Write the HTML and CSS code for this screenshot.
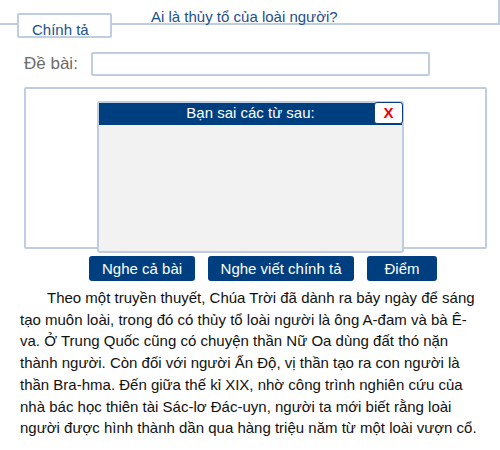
FILE: index.html
```html
<!DOCTYPE html>
<html lang="vi">
<head>
<meta charset="utf-8">
<link rel="stylesheet" href="styles.css">
</head>
<body>
<div class="topbar">
  <div class="tab">Chính tả</div>
  <div class="title">Ai là thủy tổ của loài người?</div>
</div>
<div class="row">
  <label class="label">Đề bài:</label>
  <div class="input"></div>
</div>
<div class="board">
  <div class="popup">
    <div class="popup-head">
      <span class="popup-title">Bạn sai các từ sau:</span>
      <span class="close">X</span>
    </div>
    <div class="popup-body"></div>
  </div>
</div>
<div class="buttons">
  <span class="btn">Nghe cả bài</span>
  <span class="btn">Nghe viết chính tả</span>
  <span class="btn btn-score">Điểm</span>
</div>
<p class="text">Theo một truyền thuyết, Chúa Trời đã dành ra bảy ngày để sáng tạo muôn loài, trong đó có thủy tổ loài người là ông A-đam và bà Ê-va. Ở Trung Quốc cũng có chuyện thần Nữ Oa dùng đất thó nặn thành người. Còn đối với người Ấn Độ, vị thần tạo ra con người là thần&nbsp;Bra-hma. Đến giữa thế kỉ XIX, nhờ công trình nghiên cứu của nhà&nbsp;bác học thiên tài Sác-lơ Đác-uyn, người ta mới biết rằng loài người được hình thành dần qua hàng triệu năm từ một loài vượn cổ.</p>
</body>
</html>
```

FILE: styles.css
```css
* { box-sizing: border-box; }
body {
  margin: 0;
  background: #fff;
  font-family: "Liberation Sans", Arial, sans-serif;
  color: #111;
}
.topbar {
  position: relative;
  width: 500px;
  height: 25px;
  border-right: 2px solid #bfcde0;
  border-bottom: 2px solid #bfcde0;
}
.tab {
  position: absolute;
  left: 17px;
  top: 13px;
  width: 95px;
  height: 25px;
  background: #fff;
  border: 2px solid #bfcde0;
  border-radius: 2px;
  padding: 6px 0 0 13px;
  font-size: 15px;
  line-height: 17px;
  color: #1d4f8e;
}
.title {
  padding: 8px 0 0 151px;
  font-size: 15px;
  line-height: 17px;
  color: #1d4f8e;
}
.row {
  display: flex;
  align-items: center;
  gap: 13px;
  margin-top: 27px;
  padding-left: 24px;
}
.label {
  font-size: 17px;
  color: #6b6b6b;
  line-height: 20px;
}
.input {
  width: 339px;
  height: 24px;
  border: 2px solid #bfcde0;
  border-radius: 2px;
}
.board {
  position: relative;
  margin: 11px 0 0 24px;
  width: 463px;
  height: 162px;
  border: 2px solid #bfcde0;
  border-radius: 2px;
}
.popup {
  position: absolute;
  left: 71px;
  top: 12px;
  width: 307px;
  height: 152px;
  background: #f2f2f2;
  border: 2px solid #bfcde0;
  border-radius: 3px;
  display: flex;
  flex-direction: column;
}
.popup-head {
  position: relative;
  height: 22px;
  background: #003f7f;
  display: flex;
  align-items: center;
  justify-content: center;
}
.popup-title {
  color: #fff;
  font-size: 15px;
  line-height: 17px;
  margin-top: -4px;
}
.close {
  position: absolute;
  right: -1px;
  top: -1px;
  width: 29px;
  height: 22px;
  background: #fff;
  border: 1px solid #0d3f7a;
  border-radius: 3px;
  color: #f00000;
  font-weight: bold;
  font-size: 15px;
  line-height: 20px;
  text-align: center;
}
.popup-body { flex: 1; }
.buttons {
  display: flex;
  gap: 12.5px;
  margin-top: 7px;
  padding-left: 89px;
}
.btn {
  height: 25px;
  padding: 0 13px;
  background: #003f7f;
  color: #fff;
  border-radius: 3px;
  font-size: 15px;
  line-height: 25px;
  text-align: center;
}
.btn-score { min-width: 70px; }
.text {
  margin: 6px 0 0;
  padding: 0 18px 0 20px;
  text-indent: 27px;
  font-size: 15px;
  line-height: 21.7px;
  color: #111;
}
```
